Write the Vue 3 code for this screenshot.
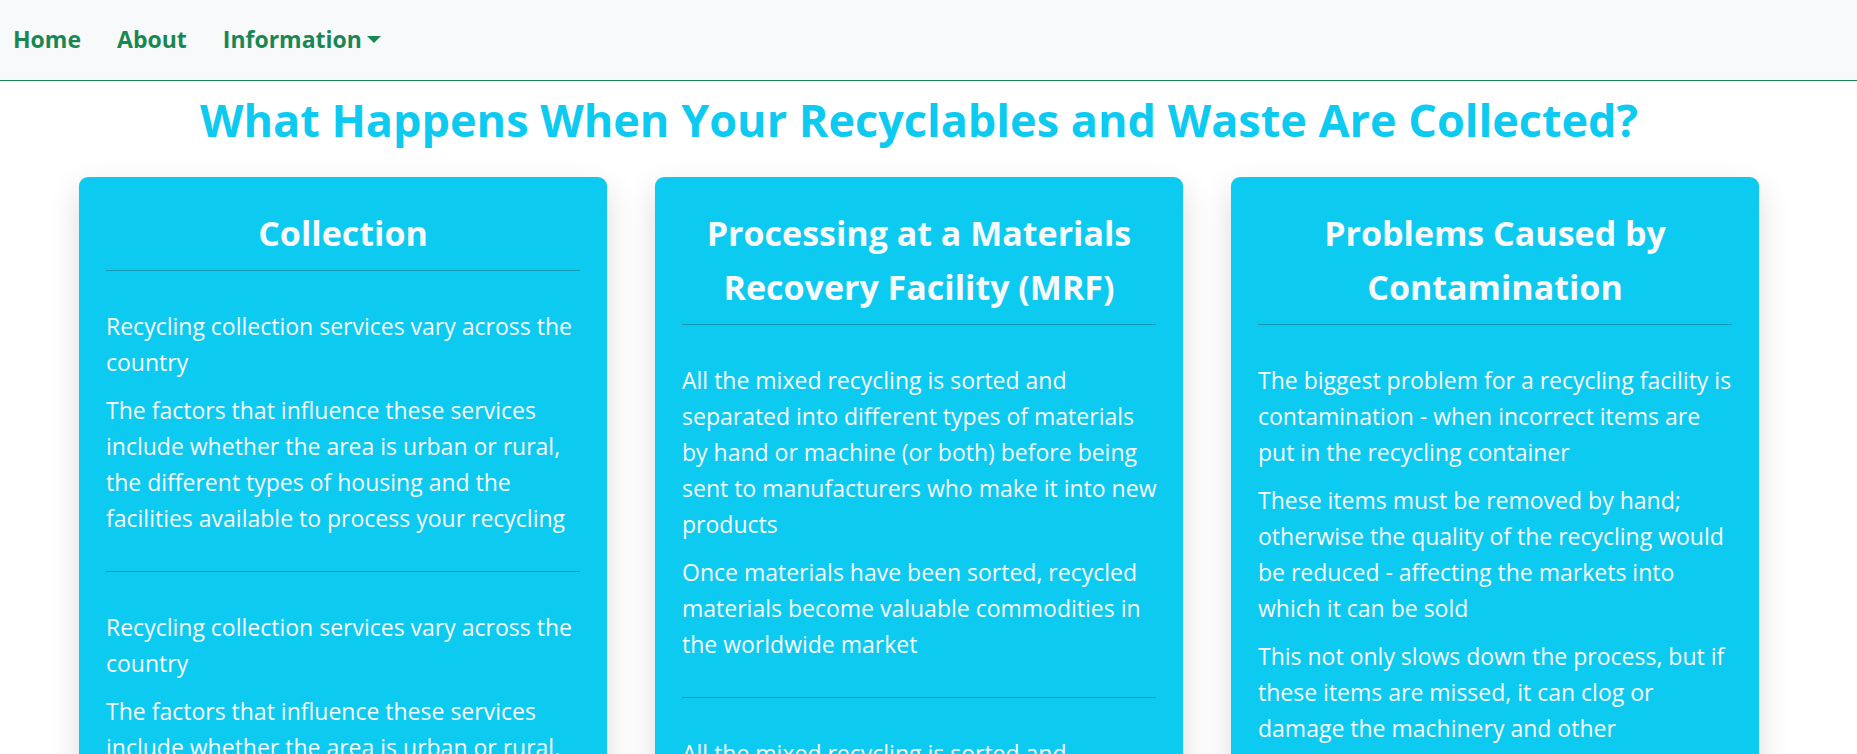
<script setup>
const collection = [
  'Recycling collection services vary across the country',
  'The factors that influence these services include whether the area is urban or rural, the different types of housing and the facilities available to process your recycling',
]
const processing = [
  'All the mixed recycling is sorted and separated into different types of materials by hand or machine (or both) before being sent to manufacturers who make it into new products',
  'Once materials have been sorted, recycled materials become valuable commodities in the worldwide market',
]
const problems = [
  'The biggest problem for a recycling facility is contamination - when incorrect items are put in the recycling container',
  'These items must be removed by hand; otherwise the quality of the recycling would be reduced - affecting the markets into which it can be sold',
  'This not only slows down the process, but if these items are missed, it can clog or damage the machinery and other',
]
const cards = [
  { title: 'Collection', sections: [collection, collection] },
  { title: 'Processing at a Materials Recovery Facility (MRF)', sections: [processing, processing] },
  { title: 'Problems Caused by Contamination', sections: [problems] },
]
</script>

<template>
  <div class="page">
    <nav class="navbar">
      <a class="nav-link" href="#home">Home</a>
      <a class="nav-link" href="#about">About</a>
      <button class="nav-link" type="button" aria-haspopup="true">
        Information
        <svg class="caret" viewBox="0 0 14 7" aria-hidden="true"><path d="M0 0h14L7 7z" /></svg>
      </button>
    </nav>
    <main class="main">
      <h1 class="title">What Happens When Your Recyclables and Waste Are Collected?</h1>
      <div class="cards">
        <article v-for="card in cards" :key="card.title" class="card">
          <h2 class="card-title">{{ card.title }}</h2>
          <section v-for="(paragraphs, i) in card.sections" :key="i" class="section">
            <p v-for="text in paragraphs" :key="text">{{ text }}</p>
          </section>
        </article>
      </div>
    </main>
  </div>
</template>

<style>
body {
  background: #fff;
}
</style>

<style scoped>
.page {
  height: 100vh;
  overflow-y: auto;
  scrollbar-width: none;
  font-family: "Segoe UI", "Open Sans", "Noto Sans", sans-serif;
}
.navbar {
  display: flex;
  align-items: center;
  gap: 36px;
  padding: 21px 13px 23px;
  background: #f8f9fa;
  border-bottom: 1px solid #198754;
}
.nav-link {
  display: flex;
  align-items: center;
  gap: 5px;
  padding: 0;
  border: 0;
  background: none;
  color: #198754;
  font: inherit;
  font-size: 23px;
  font-weight: 700;
  line-height: 36px;
  text-decoration: none;
  cursor: pointer;
}
.caret {
  width: 14px;
  height: 7px;
  fill: currentColor;
}
.main {
  padding: 10px 19px 36px 0;
}
.title {
  margin: 0 0 28px;
  color: #0dcaf0;
  font-size: 45px;
  font-weight: 700;
  line-height: 58px;
  text-align: center;
}
.cards {
  display: grid;
  grid-template-columns: repeat(3, 1fr);
  gap: 48px;
  max-width: 1680px;
  margin: 0 auto;
}
.card {
  padding: 29px 27px 27px;
  border-radius: 9px;
  background: #0dcaf0;
  color: #f8f9fa;
  box-shadow: 0 12px 32px rgba(0, 0, 0, 0.14);
}
.card-title {
  margin: 0 0 10px;
  font-size: 34px;
  font-weight: 700;
  line-height: 54px;
  text-align: center;
}
.section {
  padding: 37px 0 35px;
  border-top: 1px solid rgba(33, 37, 41, 0.3);
  font-size: 23px;
  line-height: 36px;
}
.section p {
  margin: 0 -8px 12px 0;
}
.section p:last-child {
  margin-bottom: 0;
}
</style>
